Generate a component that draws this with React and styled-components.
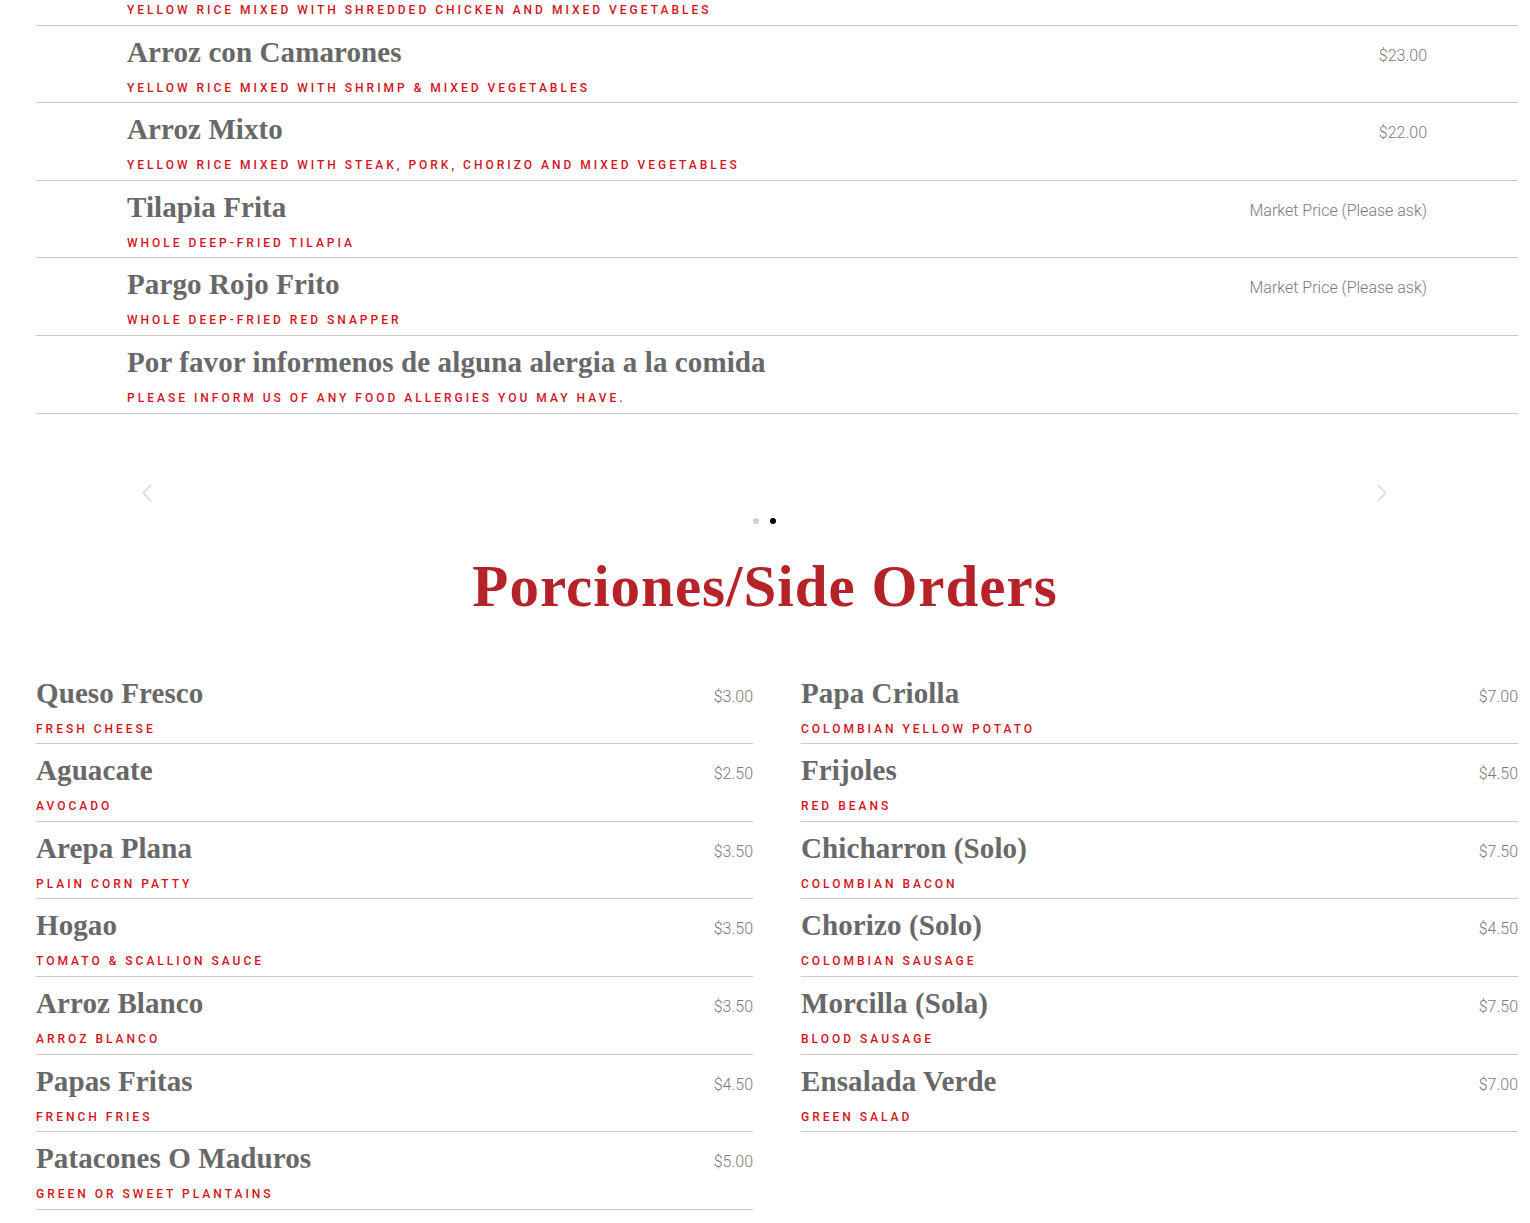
import React from "react";
import styled, { createGlobalStyle } from "styled-components";

const Global = createGlobalStyle`
  html, body { margin: 0; padding: 0; background: #fff; }
  body { font-family: Roboto, "Liberation Sans", sans-serif; overflow: hidden; }
`;

const Page = styled.div`
  margin-top: -52px;
  width: 1530px;
`;

const Slider = styled.section`
  position: relative;
  padding: 0 12px 0 36px;
`;

const RowList = styled.div`
  display: flex;
  flex-direction: column;
`;

const Row = styled.div`
  display: flex;
  flex-direction: column;
  padding: 10px ${(p) => (p.$inset ? "91px" : "0")} 6.6px;
  border-bottom: 1px solid #c9c9c9;
`;

const TitleLine = styled.div`
  display: flex;
  justify-content: space-between;
  align-items: center;
  height: 32px;
  margin-bottom: 12px;
`;

const Title = styled.h3`
  margin: 0;
  font-family: "Liberation Serif", "DejaVu Serif", serif;
  font-weight: 700;
  font-size: 29px;
  line-height: 32px;
  color: #686868;
  letter-spacing: 0.1px;
`;

const Price = styled.span`
  font-family: Roboto, "Liberation Sans", sans-serif;
  font-weight: 300;
  font-size: 16px;
  color: #7a7a7a;
  padding-top: 7px;
`;

const Desc = styled.p`
  margin: 0;
  font-family: Roboto, "Liberation Sans", sans-serif;
  font-weight: 500;
  font-size: 12px;
  line-height: 16px;
  letter-spacing: 3px;
  text-transform: uppercase;
  color: #d3131c;
`;

const Arrow = styled.button`
  position: absolute;
  top: 535px;
  ${(p) => (p.$side === "left" ? "left: 140px;" : "right: 141px;")}
  width: 14px;
  height: 20px;
  padding: 0;
  border: 0;
  background: none;
  display: flex;
  align-items: center;
  justify-content: center;
`;

const Dots = styled.div`
  display: flex;
  justify-content: center;
  gap: 11px;
  margin-top: 104px;
  margin-left: -26px;
`;

const Dot = styled.span`
  width: 6px;
  height: 6px;
  border-radius: 50%;
  background: ${(p) => (p.$active ? "#000" : "#d0d0d0")};
`;

const Heading = styled.h2`
  margin: 28px 0 0;
  text-align: center;
  font-family: "Liberation Serif", "DejaVu Serif", serif;
  font-weight: 700;
  font-size: 59px;
  line-height: 68px;
  letter-spacing: 1px;
  color: #b52228;
`;

const SideGrid = styled.div`
  display: grid;
  grid-template-columns: 1fr 1fr;
  column-gap: 48px;
  align-items: start;
  padding: 0 12px 0 36px;
  margin-top: 47px;
`;

const Chevron = ({ dir }) => (
  <svg width="10" height="18" viewBox="0 0 10 18" fill="none">
    <path
      d={dir === "left" ? "M8.5 1.5 L1.5 9 L8.5 16.5" : "M1.5 1.5 L8.5 9 L1.5 16.5"}
      stroke="#e3e3e3"
      strokeWidth="2.4"
      strokeLinecap="round"
      strokeLinejoin="round"
    />
  </svg>
);

const mains = [
  ["Arroz con Pollo", "$20.00", "Yellow rice mixed with shredded chicken and mixed vegetables"],
  ["Arroz con Camarones", "$23.00", "Yellow rice mixed with shrimp & mixed vegetables"],
  ["Arroz Mixto", "$22.00", "Yellow rice mixed with steak, pork, chorizo and mixed vegetables"],
  ["Tilapia Frita", "Market Price (Please ask)", "Whole deep-fried tilapia"],
  ["Pargo Rojo Frito", "Market Price (Please ask)", "Whole deep-fried red snapper"],
  ["Por favor informenos de alguna alergia a la comida", "", "Please inform us of any food allergies you may have."],
];

const leftSides = [
  ["Queso Fresco", "$3.00", "Fresh cheese"],
  ["Aguacate", "$2.50", "Avocado"],
  ["Arepa Plana", "$3.50", "Plain corn patty"],
  ["Hogao", "$3.50", "Tomato & scallion sauce"],
  ["Arroz Blanco", "$3.50", "Arroz blanco"],
  ["Papas Fritas", "$4.50", "French fries"],
  ["Patacones O Maduros", "$5.00", "Green or sweet plantains"],
  ["Arepa con Queso", "$4.00", "Corn patty with cheese"],
];

const rightSides = [
  ["Papa Criolla", "$7.00", "Colombian yellow potato"],
  ["Frijoles", "$4.50", "Red beans"],
  ["Chicharron (Solo)", "$7.50", "Colombian bacon"],
  ["Chorizo (Solo)", "$4.50", "Colombian sausage"],
  ["Morcilla (Sola)", "$7.50", "Blood sausage"],
  ["Ensalada Verde", "$7.00", "Green salad"],
];

const MenuRow = ({ item, inset }) => (
  <Row $inset={inset}>
    <TitleLine>
      <Title>{item[0]}</Title>
      {item[1] && <Price>{item[1]}</Price>}
    </TitleLine>
    <Desc>{item[2]}</Desc>
  </Row>
);

export default function App() {
  return (
    <Page>
      <Global />
      <Slider>
        <RowList>
          {mains.map((m) => (
            <MenuRow key={m[0]} item={m} inset />
          ))}
        </RowList>
        <Arrow $side="left" aria-label="Previous">
          <Chevron dir="left" />
        </Arrow>
        <Arrow $side="right" aria-label="Next">
          <Chevron dir="right" />
        </Arrow>
        <Dots>
          <Dot />
          <Dot $active />
        </Dots>
      </Slider>
      <Heading>Porciones/Side Orders</Heading>
      <SideGrid>
        <RowList>
          {leftSides.map((m) => (
            <MenuRow key={m[0]} item={m} />
          ))}
        </RowList>
        <RowList>
          {rightSides.map((m) => (
            <MenuRow key={m[0]} item={m} />
          ))}
        </RowList>
      </SideGrid>
    </Page>
  );
}
